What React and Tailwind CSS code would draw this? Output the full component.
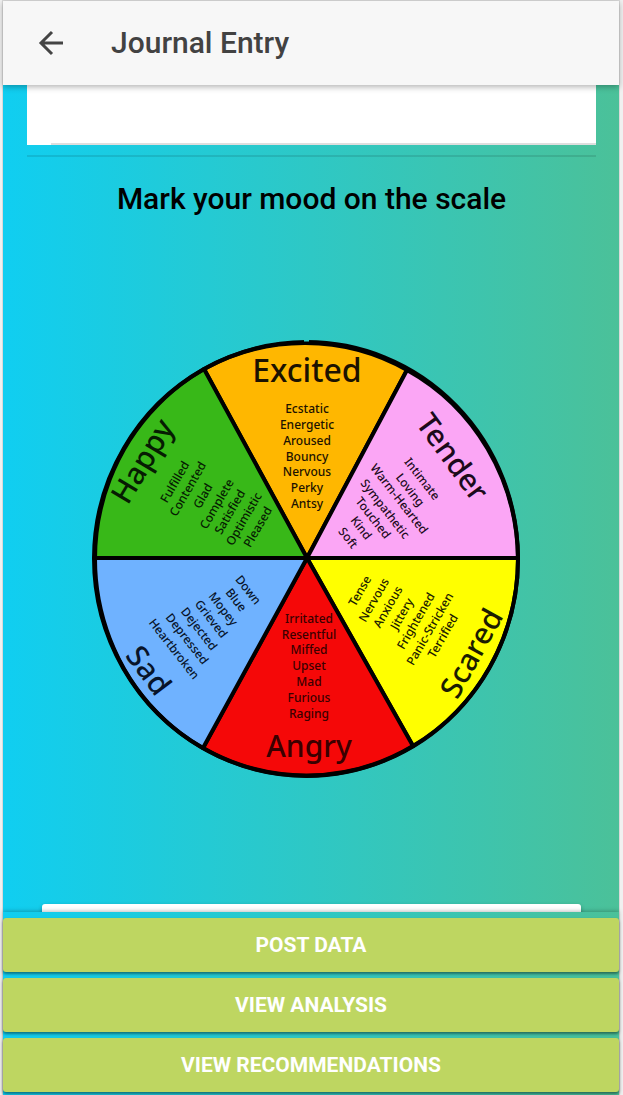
const slices = [
  { name: "Excited", fill: "#ffb700", ink: "#1c1200", d: "M307 557 L204 368 A212 217 0 0 1 407 369 Z", at: [307, 370], size: 32, angle: 0, listAngle: 0,
    words: [["Ecstatic", 307, 408], ["Energetic", 307, 424], ["Aroused", 307, 440], ["Bouncy", 307, 456], ["Nervous", 307, 471], ["Perky", 307, 487], ["Antsy", 307, 503]] },
  { name: "Tender", fill: "#fba6f5", ink: "#1c0a1b", d: "M307 557 L407 369 A212 217 0 0 1 518 557 Z", at: [453, 456], size: 30, angle: 54, listAngle: 52,
    words: [["Intimate", 422, 478], ["Loving", 410, 489], ["Warm-Hearted", 399, 498], ["Sympathetic", 385, 508], ["Touched", 373, 517], ["Kind", 361, 527], ["Soft", 348, 537]] },
  { name: "Scared", fill: "#ffff00", ink: "#1c1c00", d: "M307 557 L518 557 A212 217 0 0 1 413 745 Z", at: [471, 652], size: 30, angle: -61, listAngle: -60,
    words: [["Tense", 360, 590], ["Nervous", 374, 599], ["Anxious", 388, 606], ["Jittery", 402, 613], ["Frightened", 416, 620], ["Panic-Stricken", 430, 628], ["Terrified", 443, 635]] },
  { name: "Angry", fill: "#f50808", ink: "#3a0000", d: "M307 557 L413 745 A212 217 0 0 1 203 747 Z", at: [309, 745], size: 30, angle: 0, listAngle: 0,
    words: [["Irritated", 309, 618], ["Resentful", 309, 634], ["Miffed", 309, 649], ["Upset", 309, 665], ["Mad", 309, 681], ["Furious", 309, 697], ["Raging", 309, 713]] },
  { name: "Sad", fill: "#6fb2ff", ink: "#08142a", d: "M307 557 L203 747 A212 217 0 0 1 94 557 Z", at: [149, 669], size: 30, angle: 53, listAngle: 52,
    words: [["Down", 248, 589], ["Blue", 236, 599], ["Mopey", 223, 608], ["Grieved", 211, 618], ["Dejected", 199, 628], ["Depressed", 187, 638], ["Heartbroken", 174, 648]] },
  { name: "Happy", fill: "#38b818", ink: "#061c02", d: "M307 557 L94 557 A212 217 0 0 1 204 368 Z", at: [142, 460], size: 30, angle: -59, listAngle: -60,
    words: [["Fulfilled", 175, 481], ["Contented", 188, 488], ["Glad", 203, 495], ["Complete", 217, 503], ["Satisfied", 230, 511], ["Optimistic", 244, 518], ["Pleased", 258, 526]] },
];

function Label({ x, y, angle, size, drop, ink, children }) {
  return (
    <text x={x} y={y + drop} transform={`rotate(${angle} ${x} ${y})`} fontSize={size} fill={ink} textAnchor="middle">
      {children}
    </text>
  );
}

function MoodWheel() {
  return (
    <svg viewBox="91 338 442 442" role="img" aria-label="Mood wheel" className="h-auto w-[442px] max-w-full font-['Noto_Sans',sans-serif] font-medium">
      {slices.map((s) => (
        <path key={s.name} d={s.d} fill={s.fill} stroke="#000" strokeWidth="4" strokeLinejoin="round" />
      ))}
      <ellipse cx="306.5" cy="558" rx="211.5" ry="217" fill="none" stroke="#000" strokeWidth="4" />
      <path d="M304 339.5h5" stroke="#2cc8c6" strokeWidth="2" />
      {slices.map((s) => (
        <g key={s.name}>
          <Label x={s.at[0]} y={s.at[1]} angle={s.angle} size={s.size} drop={11} ink={s.ink}>{s.name}</Label>
          {s.words.map(([word, x, y]) => (
            <Label key={word} x={x} y={y} angle={s.listAngle} size={12} drop={4} ink={s.ink}>{word}</Label>
          ))}
        </g>
      ))}
    </svg>
  );
}

function ActionButton({ children }) {
  return (
    <button type="button" className="h-[54px] w-full rounded-[3px] bg-[#bed661] pt-[2px] text-[21px] font-bold text-white uppercase shadow-[0_2px_3px_rgba(0,0,0,0.45)]">
      {children}
    </button>
  );
}

export default function App() {
  return (
    <div className="h-screen bg-[#f0f0f0] pr-[3px] pl-[2px] font-[Roboto,sans-serif]">
      <div className="flex h-full flex-col border-x border-t border-[#d9d9d9] bg-[linear-gradient(90deg,#10cef1_0%,#2ec8c5_50%,#4bc199_100%)]">
        <header className="z-10 flex h-[84px] shrink-0 items-center gap-10 bg-[#f7f7f7] px-7 shadow-[0_2px_6px_rgba(0,0,0,0.3)]">
          <button type="button" aria-label="Back" className="flex size-10 items-center justify-center">
            <svg viewBox="0 0 26 26" className="size-[26px]" fill="none" stroke="#444" strokeWidth="3">
              <path d="M25 13H4M14 2 3 13l11 11" />
            </svg>
          </button>
          <h1 className="text-[30px] leading-9 font-medium text-[#424242]">Journal Entry</h1>
        </header>

        <main className="flex-1 overflow-y-auto pr-[23px] pl-6 [scrollbar-width:none]">
          <div className="bg-white pl-6">
            <textarea aria-label="Journal text" className="block h-[60px] w-full resize-none border-b-2 border-[#dedede] outline-none" />
          </div>
          <hr className="mt-[10px] border-t-2 border-black/10" />
          <h2 className="mt-6 text-center text-[30px] leading-9 font-medium text-black">Mark your mood on the scale</h2>
          <div className="mt-[122px] flex justify-center">
            <MoodWheel />
          </div>
          <div className="mx-[15px] mt-[123px] mb-4 h-24 rounded-[3px] bg-white shadow-[0_2px_4px_rgba(0,0,0,0.3)]" />
        </main>

        <footer className="z-10 flex shrink-0 flex-col gap-[6px] bg-[linear-gradient(90deg,#10cef1_0%,#2ec8c5_50%,#4bc199_100%)] pt-[6px] pb-[3px] shadow-[0_-1px_4px_rgba(0,0,0,0.25)]">
          <ActionButton>Post Data</ActionButton>
          <ActionButton>View Analysis</ActionButton>
          <ActionButton>View Recommendations</ActionButton>
        </footer>
      </div>
    </div>
  );
}
